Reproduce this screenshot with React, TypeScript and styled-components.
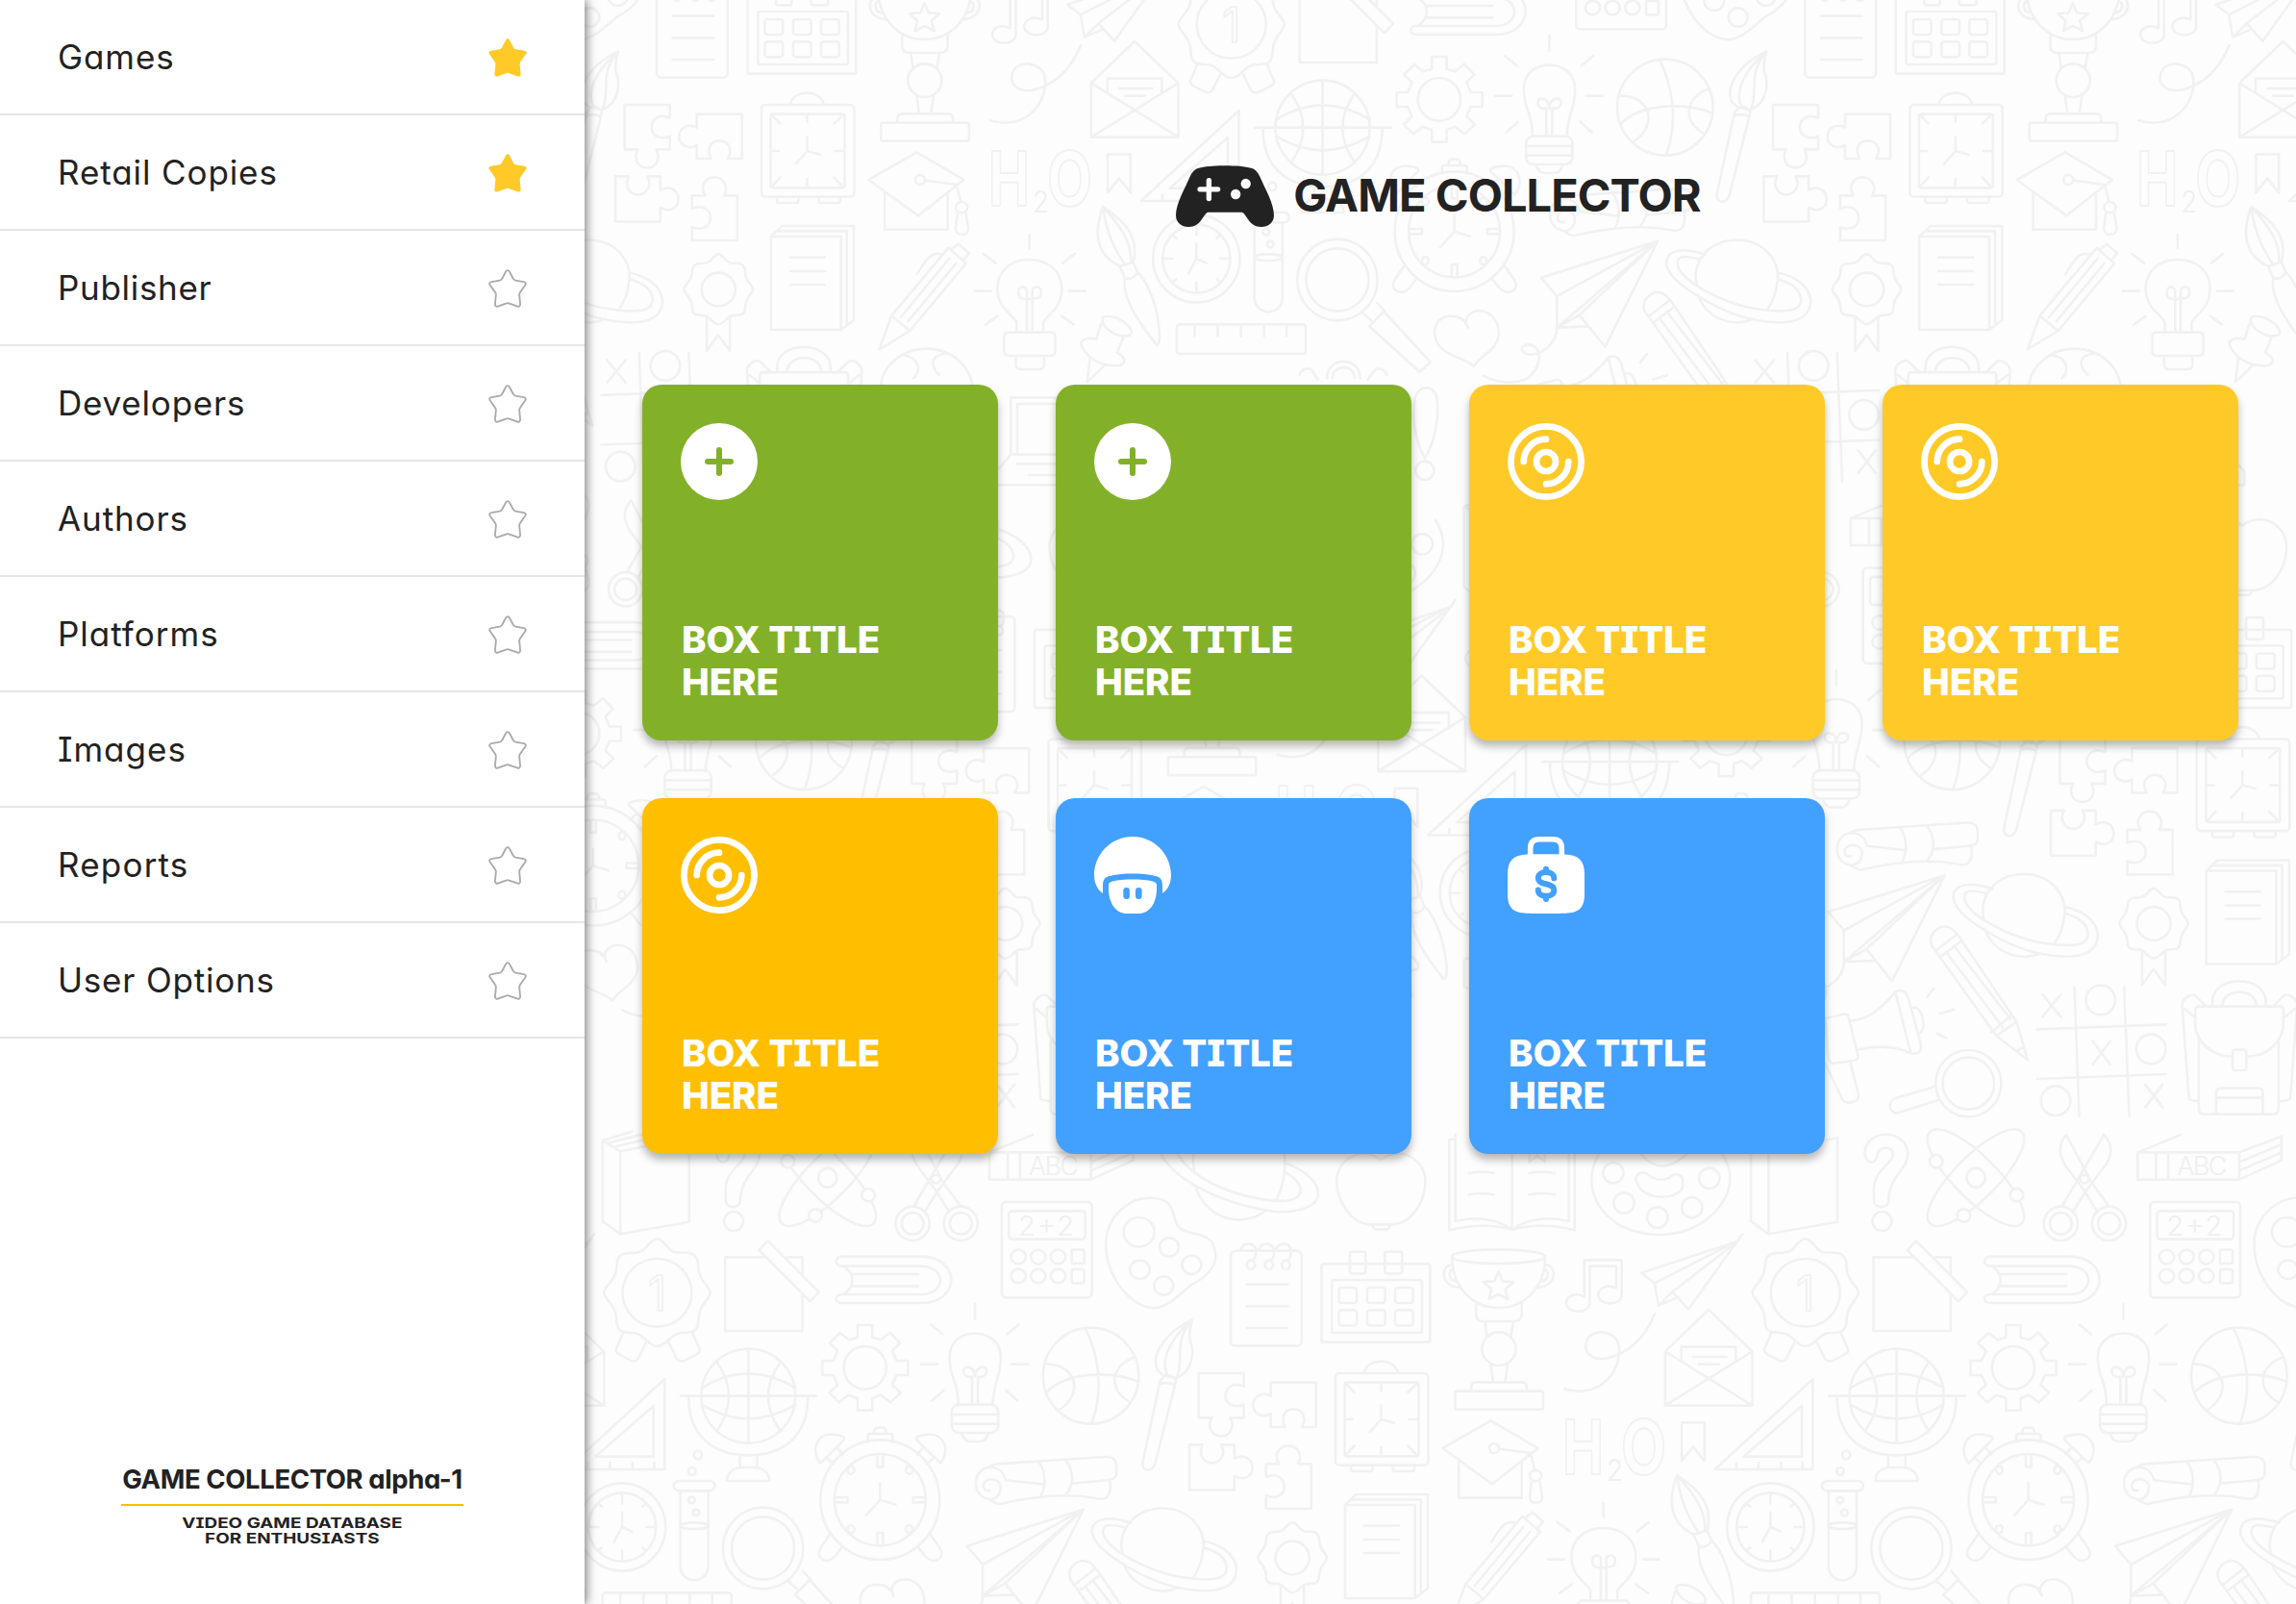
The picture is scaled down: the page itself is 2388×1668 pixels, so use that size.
import React from "react";
import styled, { createGlobalStyle } from "styled-components";

const GlobalStyle = createGlobalStyle`
  *, *::before, *::after { box-sizing: border-box; }
  html, body { margin: 0; padding: 0; }
  body {
    background: #fdfdfd;
    color: #222;
    font-family: Inter, "Open Sans", "Liberation Sans", sans-serif;
    font-feature-settings: "cv11", "cv08", "ss03";
  }
`;

const Page = styled.div`
  display: flex;
  width: 2388px;
  height: 1668px;
  overflow: hidden;
`;

const Sidebar = styled.aside`
  position: relative;
  z-index: 2;
  flex: none;
  display: flex;
  flex-direction: column;
  width: 608px;
  background: #fff;
  box-shadow: 2px 0 10px rgba(0, 0, 0, 0.5);
`;

const Menu = styled.nav`
  display: flex;
  flex-direction: column;
`;

const MenuRow = styled.a`
  display: flex;
  align-items: center;
  justify-content: space-between;
  height: 120px;
  padding: 2px 60px 0;
  border-bottom: 2px solid #e6e6e6;
`;

const MenuLabel = styled.span<{ $tracking: number }>`
  padding-bottom: 2px;
  font-size: 35px;
  line-height: 44px;
  letter-spacing: ${(p) => p.$tracking}px;
  white-space: nowrap;
`;

const StarIcon = styled.svg`
  width: 40px;
  height: 40px;
  overflow: visible;
`;

const Footer = styled.footer`
  display: flex;
  flex-direction: column;
  align-items: center;
  margin-top: auto;
  padding-bottom: 60px;
`;

const FooterTitle = styled.div`
  display: flex;
  justify-content: center;
  width: 356px;
  padding-bottom: 8px;
  border-bottom: 2px solid #ffbf00;
  font-size: 27.5px;
  font-weight: 700;
  line-height: 36px;
  letter-spacing: -0.4px;
  white-space: nowrap;
`;

const FooterText = styled.div`
  margin-top: 10px;
  font-size: 15px;
  font-weight: 700;
  line-height: 16px;
  text-align: center;
  white-space: nowrap;
  transform: scaleX(1.26);
`;

const Main = styled.main`
  position: relative;
  flex: 1;
  display: flex;
  flex-direction: column;
  background: #fdfdfd;
`;

const Backdrop = styled.svg`
  position: absolute;
  inset: 0;
  width: 100%;
  height: 100%;
`;

const Header = styled.header`
  position: relative;
  display: flex;
  justify-content: center;
  height: 400px;
  padding: 172px 4px 0 0;
`;

const Brand = styled.div`
  display: flex;
  align-items: center;
  gap: 20px;
  height: 64px;
`;

const Pad = styled.svg`
  width: 102px;
  height: 64px;
`;

const BrandName = styled.h1`
  margin: 0;
  padding-bottom: 2px;
  font-size: 47px;
  font-weight: 700;
  line-height: 62px;
  letter-spacing: -0.95px;
  white-space: nowrap;
`;

const Grid = styled.section`
  position: relative;
  display: grid;
  grid-template-columns: repeat(4, 370px);
  grid-auto-rows: 370px;
  gap: 60px;
  padding: 0 60px;
`;

const Card = styled.article<{ $color: string }>`
  display: flex;
  flex-direction: column;
  justify-content: space-between;
  padding: 40px 40px 39px;
  border-radius: 20px;
  background: ${(p) => p.$color};
  color: ${(p) => p.$color};
  box-shadow: 0 6px 8px rgba(0, 0, 0, 0.28);
`;

const CardIcon = styled.svg`
  width: 80px;
  height: 80px;
`;

const CardTitle = styled.h2`
  width: 250px;
  margin: 0;
  padding-left: 1px;
  color: #fff;
  font-size: 38.5px;
  font-weight: 800;
  line-height: 44px;
  letter-spacing: -0.1px;
`;

/* ---------- icons ---------- */

const STAR =
  "M18 1.8C19 -.2 21 -.2 22 1.8L26 9.3C26.5 10.4 27.3 11 28.5 11.2L37.5 12.8C39.7 13.2 40.3 15 38.8 16.6L33.6 24C32.8 25 32.6 26 32.7 27.2L33.6 36.8C33.8 39 32 40.2 30 39.2L21.8 36.2C20.6 35.7 19.4 35.7 18.2 36.2L10 39.2C8 40.2 6.2 39 6.4 36.8L7.3 27.2C7.4 26 7.2 25 6.4 24L1.2 16.6C-.3 15 .3 13.2 2.5 12.8L11.5 11.2C12.7 11 13.5 10.4 14 9.3Z";

const Star = ({ on }: { on: boolean }) => (
  <StarIcon viewBox="0 0 40 40">
    {on ? (
      <path d={STAR} fill="#ffca28" />
    ) : (
      <path d={STAR} fill="none" stroke="#aaa" strokeWidth="1.9" transform="translate(.8 .8) scale(.96)" />
    )}
  </StarIcon>
);

const Controller = () => (
  <Pad viewBox="0 0 102.4 64">
    <path
      fill="#222"
      d="M51.2 0C40 0 30 .8 24 2.6C19 4 17 7 14.8 11.5C9.5 24 0 40 0 52C0 59.5 6 64 13.5 64C19 64 23 61.5 26 57.5L31 50.5C32 49.2 33 48.7 34.5 48.7H68C69.5 48.7 70.4 49.2 71.4 50.5L76.4 57.5C79.4 61.5 83.4 64 89 64C96.5 64 102.4 59.5 102.4 52C102.4 40 93 24 87.6 11.5C85.4 7 83.4 4 78.4 2.6C72.4 .8 62.4 0 51.2 0Z"
    />
    <path d="M25.2 24.8H43.8M34.5 15.5V34.5" stroke="#fdfdfd" strokeWidth="5.4" strokeLinecap="round" />
    <circle cx="73" cy="19" r="5.2" fill="#fdfdfd" />
    <circle cx="62.4" cy="30" r="5.2" fill="#fdfdfd" />
  </Pad>
);

type Kind = "plus" | "disc" | "mushroom" | "case";

const glyphs: Record<Kind, React.ReactNode> = {
  plus: (
    <>
      <circle cx="40" cy="40" r="40" fill="#fff" />
      <path d="M28 40H52M40 28V52" stroke="currentColor" strokeWidth="6" strokeLinecap="round" />
    </>
  ),
  disc: (
    <g fill="none" stroke="#fff" strokeWidth="6.7" strokeLinecap="round">
      <circle cx="40" cy="40" r="36.6" />
      <circle cx="40" cy="40" r="10" />
      <path d="M16.7 40A23.3 23.3 0 0 1 40 16.7M63.3 40A23.3 23.3 0 0 1 40 63.3" />
    </g>
  ),
  mushroom: (
    <>
      <path
        fill="#fff"
        d="M40 0C18 0 0 18 0 40C0 48 3 55 9 59V51C9 45 11 42 16 41C24 39 32 38.5 40 38.5S56 39 64 41C69 42 71 45 71 51V59C77 55 80 48 80 40C80 18 62 0 40 0Z"
      />
      <path
        fill="#fff"
        d="M40 44.5C32 44.5 25 45 19 46.5C16 47.3 15 48.5 15 51V54C15 70 23 80 34 80H46C57 80 65 70 65 54V51C65 48.5 64 47.3 61 46.5C55 45 48 44.5 40 44.5Z"
      />
      <path d="M33.6 56.4V61.8M46.3 56.4V61.8" stroke="currentColor" strokeWidth="6.6" strokeLinecap="round" />
    </>
  ),
  case: (
    <>
      <path d="M23.7 22V12Q23.7 2.8 33 2.8H47Q56.3 2.8 56.3 12V22" fill="none" stroke="#fff" strokeWidth="5.6" />
      <path
        fill="#fff"
        d="M20 18.5C28 18 52 18 60 18.5C74 19 80 25 80 39V60C80 74 74 79.5 60 79.7C52 80 28 80 20 79.7C6 79.5 0 74 0 60V39C0 25 6 19 20 18.5Z"
      />
      <path
        d="M48.3 43.3C48.3 39.3 44.5 37 40 37S31.8 39.3 31.8 43.2C31.8 47 35 48.3 40 49.3S48.3 51.9 48.3 55.7C48.3 59.5 45 61.8 40 61.8S31.8 59.5 31.8 55.5M40 33.8V37M40 61.8V65"
        fill="none"
        stroke="currentColor"
        strokeWidth="6"
        strokeLinecap="round"
      />
    </>
  ),
};

/* ---------- doodle backdrop ---------- */

type Sheet = {
  at: [number, number];
  scale: [number, number];
  paths: string[];
  ellipses?: number[][];
  rects?: number[][];
};

const WIDE: [number, number] = [0.38265, 0.33333];
const EVEN: [number, number] = [0.33333, 0.33333];

const ROSETTE =
  "M218 325C240 325 245 368 275 368C310 365 330 370 330 410C330 460 362 470 362 493C362 515 330 530 330 580C328 615 315 618 285 618C255 618 245 660 218 660C192 660 182 618 152 618C120 618 108 612 108 580C108 530 74 515 74 493C74 470 108 455 108 410C108 370 130 368 160 368C192 366 195 325 218 325Z";

const sheets: Sheet[] = [
  {
    at: [600, 1180],
    scale: WIDE,
    paths: [
      "M70 18V270L118 310L305 272V10M118 310V52L70 18L150 -10M118 52L305 10M85 26L190 -5M100 38L220 5",
      ROSETTE,
      "M125 620L106 670Q106 680 115 685L150 706Q160 708 165 700L188 650M315 620L334 670Q336 680 325 685L290 706Q278 708 272 700L248 645",
      "M508 382H403V612H613V500M613 435V382H572M519 331L658 491L634 520L495 360Z",
      "M720 380H935C1045 380 1045 525 935 525H720C700 525 700 498 720 498H935C1005 498 1005 410 935 410H720C700 410 700 380 720 380ZM725 410C758 435 755 475 725 498M745 435H928M745 472H928",
      "M466 668V962M282 815H652M340 790Q466 700 594 790M340 842Q466 930 594 842M380 708Q446 815 380 925M554 708Q486 815 554 925",
      "M304 820C304 940 370 1000 466 1000S628 940 628 820M443 1002V1038M490 1002V1038M408 1080H523C523 1050 500 1038 480 1038H450C430 1038 408 1050 408 1080Z",
      "M763 594H803V632L826 640L851 617L878 650L857 675L869 705H900V750H869L857 780L880 805L852 835L826 812L803 822V860H763V822L738 812L713 835L686 805L709 780L697 750H667V705H697L709 675L687 650L715 618L740 640L763 632Z",
      "M1037 842C1035 760 1013 760 1013 695C1013 645 1045 620 1082 620S1152 645 1152 695C1152 760 1132 770 1130 842M1074 842V755M1090 842V755M1074 755C1045 760 1045 725 1062 725C1075 725 1082 740 1082 755C1082 740 1090 725 1103 725C1120 725 1118 760 1090 755M1018 873H1146M1018 902H1146M1046 932C1050 950 1060 957 1070 957H1095C1108 957 1115 945 1118 932",
      "M1082 528V575M962 592L994 622M1201 592L1170 622M935 716H980M1182 716H1227M997 797L965 830M1166 797L1198 830",
      "M1382 604C1415 680 1435 790 1400 898M1277 803C1330 740 1450 735 1525 770M1270 716C1350 710 1385 800 1312 858M1513 695C1455 720 1440 790 1502 834",
      "M123 1118V1150M123 1298V1330M35 1224H58M188 1224H212M123 1178V1224L150 1238M123 1224L101 1270M60 1152L68 1160M186 1152L178 1160M60 1296L68 1288M186 1296L178 1288",
      "M281 1111V1345C281 1405 357 1405 357 1345V1111",
      "M791 958V940Q791 933 798 933H850Q858 933 858 940V958M807 933Q807 914 818 914H832Q840 914 841 933M662 1025C635 990 650 930 695 935C725 938 730 945 725 952ZM988 1025C1015 990 1000 930 955 935C925 938 918 945 923 952ZM677 1008L697 1026M706 975L724 997M971 1008L951 1026M942 975L926 997",
      "M690 1242L662 1290C645 1320 680 1345 702 1315L722 1285M958 1242L987 1290C1004 1320 970 1345 947 1315L926 1285",
      "M817 1001V1036H832V1001M817 1278V1242H832V1278M703 1131H736V1147H703M946 1131H914V1147H946M824 1087V1139L866 1154M824 1139L786 1188",
      "M1120 1036C1128 1030 1134 1028 1145 1027L1435 1005C1470 1003 1468 1030 1466 1060C1465 1072 1455 1075 1449 1075C1452 1110 1450 1140 1420 1136C1330 1115 1230 1130 1150 1152C1140 1152 1130 1145 1122 1138C1084 1128 1084 1095 1084 1085C1086 1050 1110 1035 1130 1037C1155 1042 1162 1060 1166 1078L1272 1091M1122 1138C1150 1135 1152 1110 1152 1098C1148 1068 1105 1068 1105 1095C1105 1112 1120 1112 1122 1108M1255 1020C1275 1050 1275 1095 1262 1125M1328 1014C1352 1050 1352 1090 1330 1122M1346 1088L1449 1077",
    ],
    ellipses: [
      [218, 493, 94, 106],
      [466, 815, 128, 147],
      [783, 727, 58, 67],
      [1397, 752, 130, 150],
      [123, 1224, 118, 137],
      [123, 1224, 92, 107],
      [319, 1220, 38, 10],
      [329, 999, 11, 13],
      [313, 1050, 10, 12],
      [312, 1140, 9, 10],
      [324, 1179, 9, 10],
      [506, 1290, 109, 127],
      [506, 1290, 85, 98],
      [824, 1139, 162, 187],
      [824, 1139, 124, 143],
      [745, 1046, 9, 12],
      [903, 1046, 9, 12],
      [745, 1230, 9, 12],
      [903, 1230, 9, 12],
      [1200, 381, 20, 22],
      [1254, 381, 20, 22],
      [1308, 381, 20, 22],
      [1200, 441, 20, 22],
      [1254, 441, 20, 22],
      [1308, 441, 20, 22],
    ],
    rects: [
      [1155, 210, 245, 298, 12],
      [1174, 238, 208, 88, 10],
      [1345, 359, 34, 43, 5],
      [1345, 420, 34, 43, 5],
      [1019, 842, 126, 88, 20],
      [263, 1080, 112, 31, 15],
    ],
  },
  {
    at: [594, 1180],
    scale: WIDE,
    paths: [
      "M395 55C400 -20 510 -20 512 60C512 110 460 130 460 205C458 232 422 232 420 205V170C420 110 472 90 472 60C472 35 435 35 430 60C428 95 395 95 395 55Z",
      "M943 0L1012 150L1058 222M943 0C918 30 922 70 948 108L994 178L1028 242M1045 0L975 138L932 222M1045 0C1072 30 1068 75 1040 108L994 180L960 242",
      "M1137 55H1413V140H1137ZM1187 55V140M1220 55V140M1137 55L1255 0M1413 55L1528 5V80L1413 140M1413 85L1528 30M1413 112L1528 55",
      "M254 762V1044H-12ZM224 846V1004H66ZM226 1044V1024M167 1044V1024M106 1044V1024M46 1044V1024",
    ],
    ellipses: [
      [442, 270, 26, 30],
      [697, 134, 190, 62, 50],
      [697, 134, 190, 62, -50],
      [697, 134, 25, 30],
      [589, 83, 18, 20],
      [808, 188, 18, 20],
      [664, 252, 18, 20],
      [928, 277, 46, 53],
      [928, 277, 30, 34],
      [1059, 277, 46, 53],
      [1059, 277, 30, 34],
      [992, 138, 12, 13],
    ],
  },
  {
    at: [1200, 1180],
    scale: WIDE,
    paths: [
      "M20 60C60 150 200 220 330 240C420 245 455 210 445 170C435 130 395 105 360 90M65 60C100 130 200 190 320 205C380 212 410 195 395 155C385 135 370 125 358 118M108 60C105 85 108 100 110 110M355 60C360 110 350 170 332 205M115 170C140 240 190 265 232 265C265 265 290 250 305 236",
      "M617 78C560 30 497 80 497 145C497 210 540 280 590 280H645C700 280 738 210 738 145C738 80 675 30 617 78ZM592 280Q597 295 605 295H632Q640 295 644 280",
      "M820 15H803V298C860 280 930 280 974 296C1020 280 1090 280 1144 298V15H1128M820 0V270C870 255 930 260 974 296C1015 260 1080 255 1128 270V0M974 0V296M856 120Q890 112 925 120M856 187Q890 179 925 187M1021 120Q1055 112 1090 120M1021 187Q1055 179 1090 187M1021 50V85L1042 65L1063 85V50",
      "M1210 60C1170 140 1190 230 1270 285C1340 325 1430 320 1490 275C1560 220 1590 140 1545 60M1325 60C1360 110 1400 110 1450 60M1340 122C1320 110 1300 130 1318 160C1340 205 1420 205 1437 165C1445 120 1420 115 1400 135C1380 145 1360 140 1340 122Z",
      "M0 198C60 200 50 260 65 285C85 315 140 300 160 340C185 400 150 440 100 470C70 500 30 545 -5 540C-70 530 -130 440 -130 340C-130 260 -70 190 0 198Z",
      "M252 467H364M252 535H364M252 603H364M236 362C240 335 270 335 277 355Q280 385 268 392M285 362C289 335 319 335 326 355Q329 385 317 392M331 362C335 335 365 335 372 355Q375 385 363 392",
      "M811 380C811 480 870 540 937 540S1064 480 1064 380M812 405C780 405 775 475 835 478M812 420C800 425 800 455 822 457M1064 405C1095 405 1100 475 1040 478M1062 420C1075 425 1075 455 1052 457",
      "M937 427L948 457L978 459L956 482L963 513L937 498L911 513L918 482L896 459L926 457Z",
      "M876 525V565Q880 582 895 582H980Q997 582 1000 565V525M900 584L905 630M978 584L970 630M916 715L922 770M962 715L955 770M863 800V785Q865 772 877 772H1000Q1012 772 1014 785V800",
      "M1185 525V410H1257V478C1230 465 1208 480 1208 500C1210 535 1272 535 1272 500V391H1170V505C1145 490 1121 505 1121 525C1123 560 1185 560 1185 525",
      "M1580 335L1325 431L1361 463L1372 533L1410 490L1453 545L1600 310M1580 335L1361 463M1590 330L1410 490M1372 533L1422 508",
      "M1362 558C1340 620 1300 680 1230 698C1190 705 1170 680 1175 650C1185 600 1250 610 1262 650C1280 720 1220 830 1116 793",
      "M1390 676L1508 546L1627 676V845H1390ZM1390 676L1627 845M1627 676L1390 845M1434 705V662H1582V705M1466 693H1556M1482 716H1536",
      "M104 578C40 610 -10 680 10 735L25 750L60 760C110 740 110 670 98 640C95 610 100 600 104 578ZM104 578C50 630 15 700 37 748M104 578C50 650 85 700 62 758M20 765Q38 735 60 765L57 780Q38 770 18 778ZM18 765L-30 1020C-35 1055 0 1055 5 1020L60 770",
      "M122 744H245V785C215 770 195 790 195 814S215 855 245 842V883H208C220 910 210 940 183 940S145 910 158 883H122Z",
      "M318 773H441V912H402C418 885 405 856 379 856S345 885 357 912H318V870C295 885 270 870 270 843S295 800 318 815Z",
      "M97 967H133C120 995 135 1024 158 1024S198 995 183 967H219V1010C245 995 268 1010 268 1039S245 1080 219 1065V1108H97Z",
      "M305 1027H341C325 1000 340 970 366 970S405 1000 392 1027H428V1167H305V1125C330 1138 355 1125 355 1097S330 1055 305 1068Z",
      "M573 742C580 695 655 695 663 742M536 1032V1045Q536 1050 542 1050H588Q594 1050 594 1045V1032M650 1032V1045Q650 1050 656 1050H702Q708 1050 708 1045V1032M618 773V798M618 1003V975M519 888H541M720 888H694M525 780L545 803M712 780L691 803M525 996L545 970M712 996L691 970M618 845V888L654 899M618 888L587 928",
      "M916 892L1044 978L920 1090L785 978ZM829 1020V1133H1000V1020M940 980L1024 993L1036 1048M1026 1085L1022 1130C1022 1155 1056 1155 1056 1130L1050 1085",
      "M1435 898H1497V1018L1466 973L1435 1018Z",
      "M520 1155H710V1446H520ZM520 1155L550 1122H745V1415L710 1446M535 1138H726V1430M572 1220H666M572 1263H666M572 1305H666",
    ],
    ellipses: [
      [1249, 119, 28, 32],
      [1278, 213, 28, 32],
      [1369, 258, 28, 32],
      [1463, 227, 28, 32],
      [1510, 136, 28, 32],
      [42, 351, 26, 29],
      [103, 406, 26, 29],
      [27, 471, 26, 29],
      [-40, 304, 42, 46],
      [-38, 421, 27, 29],
      [264, 406, 11, 14],
      [313, 406, 11, 14],
      [359, 406, 11, 14],
      [937, 380, 127, 22],
      [938, 668, 46, 52],
      [925, 978, 13, 15],
      [1038, 1064, 16, 17],
      [377, 1320, 46, 52],
    ],
    rects: [
      [209, 362, 193, 297, 14],
      [456, 403, 295, 244, 6],
      [484, 453, 245, 165, 6],
      [533, 365, 43, 68, 6],
      [628, 365, 47, 68, 6],
      [503, 477, 49, 48, 8],
      [580, 477, 49, 48, 8],
      [656, 477, 49, 48, 8],
      [503, 547, 49, 48, 8],
      [580, 547, 49, 48, 8],
      [656, 547, 49, 48, 8],
      [819, 800, 239, 57, 6],
      [494, 744, 252, 287, 12],
      [519, 773, 201, 230, 6],
    ],
  },
  { at: [1290, 1513], scale: [0.2487, 0.21667], paths: [ROSETTE] },
  {
    at: [1197, 1319],
    scale: WIDE,
    paths: [
      "M353 990V1095L384 1045L416 1095V990",
      "M1010 773L855 985L822 1090L905 1032L1058 822ZM855 985L905 1032M1012 807L880 990M1030 822L900 1003M1016 780L1037 761L1066 790L1050 812M990 793C960 785 950 810 925 855",
      "M1195 1035V1005C1180 975 1143 960 1143 900C1143 845 1180 810 1230 810S1318 845 1318 900C1318 960 1285 975 1268 1005V1035M1223 1035V910C1223 890 1200 890 1200 912S1215 935 1230 933S1262 935 1262 912S1238 890 1238 910V1035M1193 1110V1140Q1195 1152 1205 1152H1258Q1268 1152 1270 1140V1110",
      "M1230 732V775M1105 792L1139 821M1353 792L1321 821M1080 908H1125M1337 908H1382M1143 986L1111 1013M1318 986L1351 1013",
      "M1430 645C1400 740 1420 800 1475 830L1512 818C1530 740 1490 690 1430 645ZM1430 645C1440 740 1470 790 1490 828M1430 645C1490 720 1510 770 1505 820M1475 830L1490 868Q1510 875 1524 850L1512 818M1490 868C1480 930 1530 1010 1575 1075M1524 850C1545 870 1570 930 1580 1000C1586 1050 1586 1075 1575 1075",
      "M1430 990C1460 975 1520 1020 1505 1045C1470 1060 1420 1020 1430 990ZM1425 1010L1412 1058M1487 1048L1468 1100M1412 1058C1380 1050 1365 1065 1372 1080C1395 1130 1440 1145 1475 1140C1500 1130 1485 1110 1468 1100M1395 1115L1387 1192L1432 1142",
      "M885 1108C935 1115 935 1160 915 1180M1000 1103C960 1110 960 1140 985 1170",
    ],
    ellipses: [[950, 1216, 125, 128]],
    rects: [[1161, 1037, 139, 73, 12]],
  },
  {
    at: [603, 1319],
    scale: WIDE,
    paths: [
      "M568 977L590 1000M607 945L628 972M585 1018L625 972L751 1130L722 1161Z",
      "M1369 752L1052 866L1095 924V1022L1369 752L1095 924M1369 752L1156 983L1226 1082ZM1156 983L1095 1022L1180 1018M1095 1022C1095 1070 1055 1108 1020 1106C990 1100 995 1070 1025 1076C1060 1090 1050 1150 1015 1180C980 1200 930 1195 895 1172",
      "M853 1022C845 990 820 985 800 987C765 992 755 1030 768 1065C785 1110 845 1115 869 1143C885 1110 937 1090 937 1040C937 960 855 950 848 1002",
      "M110 1012V1048M173 1012V1048M236 1012V1048M299 1012V1048M360 1012V1048",
      "M470 1180C470 1110 560 1110 560 1180M485 1180C485 1135 545 1135 545 1180M395 1170C400 1150 420 1145 430 1155L445 1185M633 1170C628 1150 608 1145 600 1155L580 1185",
    ],
    rects: [[62, 1012, 350, 92, 8]],
  },
  {
    at: [892.5, 1439.5],
    scale: WIDE,
    paths: [
      "M718 525C705 450 755 387 827 387S945 450 938 515C935 550 925 580 910 605M722 558C735 610 780 643 827 645C845 645 860 640 872 633M742 433C690 412 635 412 636 460C638 520 780 610 860 632C950 655 1030 650 1028 575C1025 530 985 500 940 490M727 448C690 435 665 435 666 460C668 510 780 580 870 600C950 615 1002 615 1002 572C1000 540 970 520 942 510",
      "M577 610C565 570 600 545 620 552C640 558 640 570 650 580L808 848L838 967L752 890ZM589 625L645 575M603 643L658 595M618 632L770 865M640 615L790 838M740 880L795 826M752 892L808 848M808 940L828 925",
      "M965 740L978 1142M1100 740L1114 1142M863 871L1214 856M863 1026L1214 1011M878 762L928 832M928 762L878 832M1015 908L1062 980M1062 908L1015 980M1157 1043L1205 1115M1205 1043L1157 1115",
      "M1340 800V785C1340 700 1485 700 1485 785V800M1367 800C1367 740 1460 740 1460 800M1434 956C1490 956 1533 910 1533 850V810Q1533 800 1523 800H1303Q1293 800 1293 810V850C1293 910 1340 956 1394 956M1303 905V1120Q1303 1136 1318 1136H1505Q1520 1136 1520 1120V905",
      "M1350 1134V1070Q1350 1055 1362 1055H1464Q1477 1055 1477 1070V1134M1350 1085H1477M1258 800L1276 1085Q1277 1095 1303 1095M1258 800C1255 775 1285 755 1295 768L1322 798M1264 808L1294 835M1570 800L1552 1085Q1551 1095 1522 1095M1570 800C1573 775 1543 755 1533 768L1506 798M1564 808L1534 835",
      "M355 845C400 840 430 820 478 755C490 745 510 750 515 780L548 920C550 945 535 950 518 945C480 925 430 920 375 935M478 755L520 945M288 838L340 823Q348 823 351 832L377 955Q377 965 368 968L308 978Q300 975 296 960ZM288 978L335 1092Q345 1105 360 1098Q380 1095 378 1075L355 970M527 803C550 795 565 870 545 882M565 770L583 743M600 822L638 809M592 885L617 898",
      "M586 1050L480 1085C455 1095 460 1135 485 1132L595 1092",
    ],
    ellipses: [
      [1036, 780, 40, 46],
      [1173, 933, 40, 46],
      [914, 1094, 40, 46],
      [677, 1040, 89, 104],
      [677, 1040, 70, 81],
    ],
    rects: [[1395, 935, 37, 64, 8]],
  },
  {
    at: [948.5, 1039.5],
    scale: EVEN,
    paths: ["M1204 278V100H1420V278M1224 278V120H1400V278M1204 278L1160 330V373H1470V330L1420 278ZM1225 307H1400M1260 342H1370"],
  },
  {
    at: [524.5, 1049.5],
    scale: EVEN,
    paths: ["M185 260C150 200 145 120 155 70C165 30 215 30 222 70C232 130 215 210 185 260Z"],
    ellipses: [[185, 298, 29, 29]],
  },
];

const line = { vectorEffect: "non-scaling-stroke" as const };

const Doodles = () => (
  <Backdrop viewBox="608 0 1780 1668">
    <defs>
      <g id="doodles" fill="none" stroke="#f1f1f1" strokeWidth="2.6" strokeLinejoin="round" strokeLinecap="round">
        {sheets.map((s, i) => (
          <g key={i} transform={`translate(${s.at.join(" ")}) scale(${s.scale.join(" ")})`}>
            {s.paths.map((d) => (
              <path key={d} d={d} {...line} />
            ))}
            {s.ellipses?.map(([cx, cy, rx, ry, turn = 0], j) => (
              <ellipse
                key={j}
                cx={cx}
                cy={cy}
                rx={rx}
                ry={ry}
                fill={turn ? "none" : rx < 30 ? "#fdfdfd" : "none"}
                transform={turn ? `rotate(${turn} ${cx} ${cy})` : undefined}
                {...line}
              />
            ))}
            {s.rects?.map(([x, y, width, height, rx], j) => (
              <rect key={j} x={x} y={y} width={width} height={height} rx={rx} {...line} />
            ))}
          </g>
        ))}
        <g fontFamily="Inter, sans-serif" strokeWidth="2">
          <text x="674" y="1363" fontSize="50" textLength="19" lengthAdjust="spacingAndGlyphs">1</text>
          <text x="1625" y="1533" fontSize="79" fontWeight="700" textLength="43" lengthAdjust="spacingAndGlyphs">H</text>
          <text x="1686" y="1533" fontSize="79" fontWeight="700" textLength="47" lengthAdjust="spacingAndGlyphs">O</text>
          <g stroke="none" fill="#efefef" fontWeight="300">
            <text x="1671" y="1540" fontSize="31" textLength="17" lengthAdjust="spacingAndGlyphs">2</text>
            <text x="1059" y="1285" fontSize="29" textLength="58" lengthAdjust="spacing">2+2</text>
            <text x="1070" y="1222" fontSize="27" textLength="52" lengthAdjust="spacing">ABC</text>
          </g>
        </g>
      </g>
    </defs>
    {[0, 1, 2].flatMap((k) =>
      [-1, 0, 1, 2].map((n) => (
        <use key={`${k}:${n}`} href="#doodles" x={n * 1194.3 - k * 298.5} y={k * -659.5} />
      ))
    )}
  </Backdrop>
);

/* ---------- content ---------- */

const menu = [
  { label: "Games", starred: true, tracking: 0.9 },
  { label: "Retail Copies", starred: true, tracking: 0.9 },
  { label: "Publisher", starred: false, tracking: 0.7 },
  { label: "Developers", starred: false, tracking: 0.8 },
  { label: "Authors", starred: false, tracking: 0.9 },
  { label: "Platforms", starred: false, tracking: 1 },
  { label: "Images", starred: false, tracking: 1 },
  { label: "Reports", starred: false, tracking: 1.2 },
  { label: "User Options", starred: false, tracking: 0.8 },
];

const cards: { kind: Kind; color: string }[] = [
  { kind: "plus", color: "#82b129" },
  { kind: "plus", color: "#82b129" },
  { kind: "disc", color: "#ffca28" },
  { kind: "disc", color: "#ffca28" },
  { kind: "disc", color: "#ffbf00" },
  { kind: "mushroom", color: "#42a0ff" },
  { kind: "case", color: "#42a0ff" },
];

export default function App() {
  return (
    <>
      <GlobalStyle />
      <Page>
        <Sidebar>
          <Menu>
            {menu.map((m) => (
              <MenuRow key={m.label}>
                <MenuLabel $tracking={m.tracking}>{m.label}</MenuLabel>
                <Star on={m.starred} />
              </MenuRow>
            ))}
          </Menu>
          <Footer>
            <FooterTitle>GAME COLLECTOR alpha-1</FooterTitle>
            <FooterText>
              VIDEO GAME DATABASE
              <br />
              FOR ENTHUSIASTS
            </FooterText>
          </Footer>
        </Sidebar>
        <Main>
          <Doodles />
          <Header>
            <Brand>
              <Controller />
              <BrandName>GAME COLLECTOR</BrandName>
            </Brand>
          </Header>
          <Grid>
            {cards.map((c, i) => (
              <Card key={i} $color={c.color}>
                <CardIcon viewBox="0 0 80 80">{glyphs[c.kind]}</CardIcon>
                <CardTitle>BOX TITLE HERE</CardTitle>
              </Card>
            ))}
          </Grid>
        </Main>
      </Page>
    </>
  );
}
